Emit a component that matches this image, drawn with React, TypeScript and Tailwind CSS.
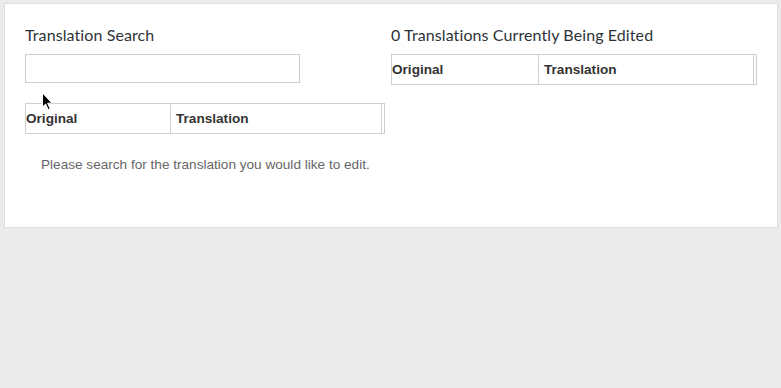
export default function App() {
  const heading = "text-[16px] leading-5 text-[#2e3338] font-['Lato','Open_Sans',sans-serif] tracking-[0.1px]";

  const HeaderTable = ({ firstW }: { firstW: string }) => (
    <div className="flex h-[31px] border border-[#cfcfcf] font-['Liberation_Sans',Arial,sans-serif] text-[13.6px] font-bold text-[#333]">
      <div className={`${firstW} flex items-center pt-[2px] border-r border-[#cfcfcf]`}>Original</div>
      <div className="flex-1 flex items-center pt-[2px] pl-[5px] border-r border-[#cfcfcf]">Translation</div>
      <div className="w-[2px]" />
    </div>
  );

  return (
    <div className="relative w-[781px] h-[388px] bg-[#ebebeb] pt-[3px] pl-[4px] overflow-hidden">
      <div className="w-[774px] h-[225px] bg-white border border-[#dedede] pt-[21px] pl-[20px] pr-[20px] flex gap-[6px]">
        {/* Left: search */}
        <div className="w-[360px] flex flex-col">
          <h2 className={heading}>Translation Search</h2>
          <input
            type="text"
            className="mt-[9px] w-[275px] h-[29px] border border-[#cccccc] outline-none px-2 text-sm"
          />
          <div className="mt-[20px]">
            <HeaderTable firstW="w-[145px]" />
          </div>
          <p className="mt-[22px] pl-[16px] font-['Liberation_Sans',Arial,sans-serif] text-[13.6px] leading-[18px] text-[#666]">
            Please search for the translation you would like to edit.
          </p>
        </div>

        {/* Right: being edited */}
        <div className="w-[366px] flex flex-col">
          <h2 className={heading}>0 Translations Currently Being Edited</h2>
          <div className="mt-[9px]">
            <HeaderTable firstW="w-[147px]" />
          </div>
        </div>
      </div>

      {/* mouse cursor */}
      <svg className="absolute left-[41px] top-[92px]" width="13" height="19" viewBox="0 0 13 19">
        <path d="M1.5 1 L1.5 15 L4.6 12 L7.2 17.6 L9.2 16.7 L6.6 11.2 L11 11.2 Z" fill="#000" stroke="#fff" strokeWidth="1" strokeLinejoin="round" />
      </svg>
    </div>
  );
}
